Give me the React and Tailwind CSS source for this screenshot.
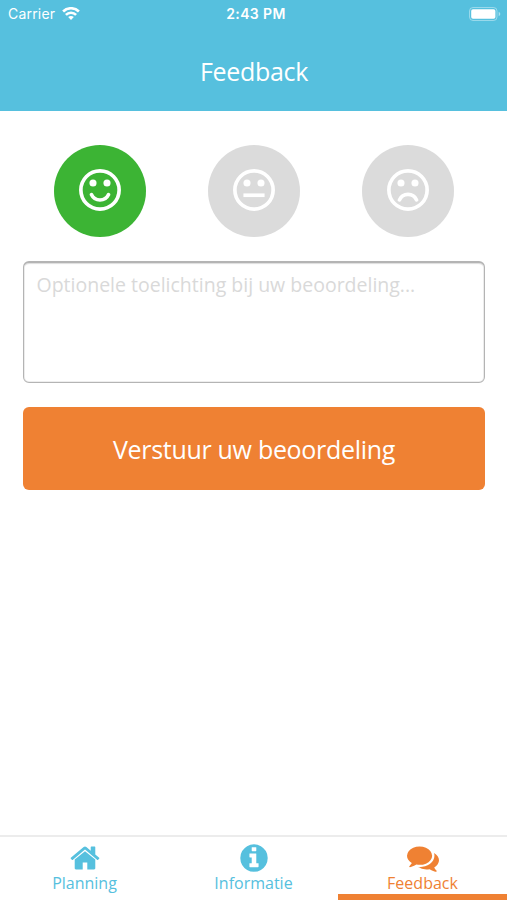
import React from "react";

const Wifi = () => (
  <svg className="w-[18px] h-[13px]" viewBox="0 0 18 13" fill="none" stroke="white" strokeWidth="2.6">
    <path d="M1.1 4.5a11.2 11.2 0 0 1 15.8 0" />
    <path d="M3.9 7.9a7.2 7.2 0 0 1 10.2 0" />
    <path d="M9 13l-2.8-2.9a3.9 3.9 0 0 1 5.6 0z" fill="white" stroke="none" />
  </svg>
);

const Battery = () => (
  <svg className="w-[32px] h-[14px]" viewBox="0 0 32 14" fill="none">
    <rect x="0.5" y="0.5" width="27.5" height="13" rx="3.5" stroke="white" strokeOpacity="0.4" />
    <rect x="2.2" y="2.2" width="24.2" height="9.6" rx="1.8" fill="white" />
    <path d="M29.7 4.8q1.6 .7 1.6 2.2t-1.6 2.2z" fill="white" fillOpacity="0.5" />
  </svg>
);

const Face = ({ children }) => (
  <svg className="mr-px mb-px w-[42px] h-[42px]" viewBox="0 0 1536 1536" fill="none" stroke="white" strokeWidth="134">
    <circle cx="768" cy="768" r="700" />
    <circle cx="512" cy="512" r="130" fill="white" stroke="none" />
    <circle cx="1024" cy="512" r="130" fill="white" stroke="none" />
    {children}
  </svg>
);

const Rating = ({ color, label, children }) => (
  <button aria-label={label} className={`flex size-[92px] items-center justify-center rounded-full ${color}`}>
    <Face>{children}</Face>
  </button>
);

const Tab = ({ label, icon, active }) => (
  <button
    className={`flex flex-1 flex-col items-center pt-[5px] border-b-[6px] ${
      active ? "text-[#ef8133] border-[#ef8133]" : "text-[#56c0de] border-transparent"
    }`}
  >
    <svg className="size-8" viewBox="0 0 1792 1792" fill="currentColor">
      <path d={icon} />
    </svg>
    <span className="-mt-px text-[16px] leading-[20px]">{label}</span>
  </button>
);

const home =
  "M1472 992v480q0 26-19 45t-45 19h-384v-384h-256v384h-384q-26 0-45-19t-19-45v-480q0-1 .5-3t.5-3l575-474 575 474q1 2 1 6zm223-69l-62 74q-8 9-21 11h-3q-13 0-21-7l-692-577-692 577q-12 8-24 7-13-2-21-11l-62-74q-8-10-7-23.5t11-21.5l719-599q32-26 76-26t76 26l244 204v-195q0-14 9-23t23-9h192q14 0 23 9t9 23v408l219 182q10 8 11 21.5t-7 23.5z";
const info =
  "M1152 1376v-160q0-14-9-23t-23-9h-96v-512q0-14-9-23t-23-9h-320q-14 0-23 9t-9 23v160q0 14 9 23t23 9h96v320h-96q-14 0-23 9t-9 23v160q0 14 9 23t23 9h448q14 0 23-9t9-23zm-128-896v-160q0-14-9-23t-23-9h-192q-14 0-23 9t-9 23v160q0 14 9 23t23 9h192q14 0 23-9t9-23zm640 416q0 209-103 385.5t-279.5 279.5-385.5 103-385.5-103-279.5-279.5-103-385.5 103-385.5 279.5-279.5 385.5-103 385.5 103 279.5 279.5 103 385.5z";
const comments =
  "M1408 768q0 139-94 257t-256.5 186.5-353.5 68.5q-86 0-176-16-124 88-278 128-36 9-86 16h-3q-11 0-20.5-8t-11.5-21q-1-3-1-6.5t.5-6.5 2-6l2.5-5 3.5-5.5 4-5 4.5-5 4-4.5q5-6 23-25t26-29.5 22.5-29 25-38.5 20.5-44q-124-72-195-177t-71-224q0-139 94-257t256.5-186.5 353.5-68.5 353.5 68.5 256.5 186.5 94 257zm384 256q0 120-71 224.5t-195 176.5q10 24 20.5 44t25 38.5 22.5 29 26 29.5 23 25q1 1 4 4.5t4.5 5 4 5 3.5 5.5l2.5 5 2 6 .5 6.5-1 6.5q-3 14-13 22t-22 7q-50-7-86-16-154-40-278-128-90 16-176 16-271 0-472-132 58 4 88 4 161 0 309-45t264-129q125-92 192-212t67-254q0-77-23-152 129 71 204 178t75 230z";

const App = () => {
  return (
    <div className="flex h-[900px] w-[507px] flex-col bg-white font-['Open_Sans',sans-serif]">
      <header className="h-[110.5px] bg-[#56c0de] text-white">
        <div className="grid h-[27px] grid-cols-3 items-center pl-2 pr-[6px] font-['Inter',sans-serif] text-[14px]">
          <div className="flex items-center gap-[7px]">
            <span className="tracking-[0.2px]">Carrier</span>
            <Wifi />
          </div>
          <span className="pl-[3px] text-center font-semibold tracking-[0.4px]">2:43 PM</span>
          <div className="flex justify-end">
            <Battery />
          </div>
        </div>
        <h1 className="pt-[26px] pl-px text-center text-[25px] leading-[36px] tracking-[-0.3px]">Feedback</h1>
      </header>

      <main className="flex-1 pl-[23px] pr-[22px] pt-[34px]">
        <div className="flex justify-between px-[31px]">
          <Rating color="bg-[#3cb434]" label="Goed">
            <path d="M455 935a345 345 0 0 0 626 0" strokeLinecap="round" />
          </Rating>
          <Rating color="bg-[#dbdbdb]" label="Neutraal">
            <path d="M448 960h640" strokeLinecap="square" />
          </Rating>
          <Rating color="bg-[#dbdbdb]" label="Slecht">
            <path d="M455 1130a345 345 0 0 1 626 0" strokeLinecap="round" />
          </Rating>
        </div>

        <textarea
          className="mt-[24px] block h-[122px] w-full resize-none rounded-[6px] border-[1.5px] border-t-2 border-[#b4b4b4] px-[12.5px] pt-[8px] text-[19.5px] leading-[28px] shadow-[inset_0_1px_1px_#dedede,inset_0_0_0_1px_#eeeeee] outline-none placeholder:text-[#d9d9d9]"
          placeholder="Optionele toelichting bij uw beoordeling..."
        />

        <button className="mt-[24.5px] h-[83px] w-full rounded-[6px] bg-[#ef8133] pt-[3px] text-[25px] tracking-[-0.3px] text-white">
          Verstuur uw beoordeling
        </button>
      </main>

      <nav className="flex h-[65px] border-t-2 border-[#ececec]">
        <Tab label="Planning" icon={home} />
        <Tab label="Informatie" icon={info} />
        <Tab label="Feedback" icon={comments} active />
      </nav>
    </div>
  );
};

export default App;
